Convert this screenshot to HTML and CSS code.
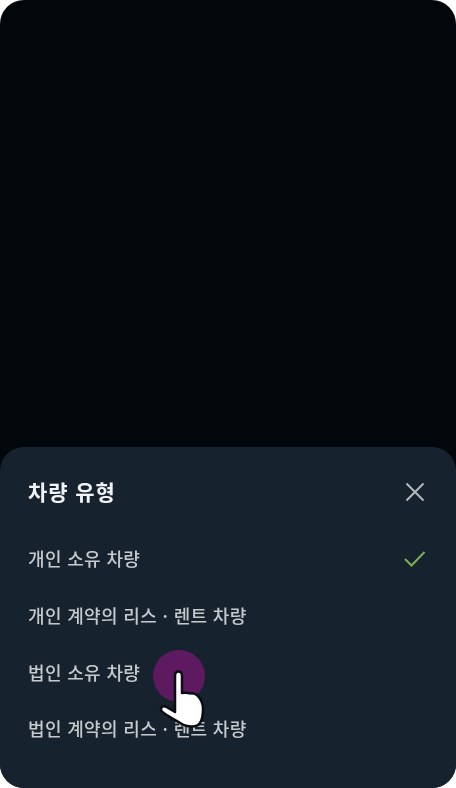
FILE: index.html
```html
<!DOCTYPE html>
<html lang="ko">
<head>
<meta charset="utf-8">
<title>차량 유형</title>
<link rel="stylesheet" href="styles.css">
</head>
<body>
<div class="frame">
  <div class="backdrop"></div>
  <section class="sheet">
    <header class="sheet-head">
      <h2 class="sheet-title">차량 유형</h2>
      <svg class="close" viewBox="0 0 20 20" width="20" height="20" fill="none" aria-hidden="true"><path d="M1.500 1.500 18.500 18.500M18.500 1.500 1.500 18.500"/></svg>
    </header>
    <ul class="options">
      <li class="option"><span>개인 소유 차량</span><svg class="check" viewBox="0 0 22 18" width="22" height="18" fill="none" aria-hidden="true"><path d="M1 9 7.500 15.500 20.500 2"/></svg></li>
      <li class="option"><span>개인 계약의 리스 · 렌트 차량</span></li>
      <li class="option"><span>법인 소유 차량</span></li>
      <li class="option"><span>법인 계약의 리스 · 렌트 차량</span></li>
    </ul>
    <div class="tap"></div>
    <svg class="hand" viewBox="0 0 52 62" width="52" height="62" aria-hidden="true"><path d="M20 8c0-2.800 1.500-4.500 3.500-4.500S27 5.200 27 8v17c3-.5 6-.5 8 .5 3-.5 6 .5 8 2.500 3 3 5 7 5 13 0 7-1 11-3 14-1.500 2.500-4 3.500-8 3.500-5 0-8-1-11-3-6-4-13-7-18-11-2-1.500-2.500-3.500-1.500-5s3.500-1.500 5-.5l8.500 5z"/></svg>
  </section>
</div>
</body>
</html>
```

FILE: styles.css
```css
html, body {
  margin: 0;
  padding: 0;
  background: #fff;
}
.frame {
  width: 456px;
  height: 788px;
  border-radius: 24px;
  overflow: hidden;
  display: flex;
  flex-direction: column;
  background: #02070c;
  font-family: "Noto Sans CJK KR", "Noto Sans", sans-serif;
}
.backdrop {
  flex: 1;
}
.sheet {
  position: relative;
  height: 341px;
  box-sizing: border-box;
  padding: 24px 28px 0;
  background: #16222e;
  border-radius: 24px 24px 0 0;
}
.sheet-head {
  display: flex;
  justify-content: space-between;
  align-items: center;
  height: 40px;
  padding-right: 3px;
}
.sheet-title {
  margin: 0;
  font-size: 21px;
  font-weight: 700;
  line-height: 40px;
  color: #f2f3f4;
  letter-spacing: 0.9px;
  filter: blur(0.6px);
}
.close {
  position: relative;
  top: 1px;
  filter: blur(0.4px);
}
.close path {
  stroke: #b4b8bc;
  stroke-width: 2;
}
.options {
  list-style: none;
  margin: 19px 0 0;
  padding: 0;
}
.option {
  display: flex;
  justify-content: space-between;
  align-items: center;
  height: 56.67px;
  padding-right: 2px;
  font-size: 18px;
  font-weight: 500;
  color: #c6c9cc;
  letter-spacing: 0.35px;
}
.option span {
  filter: blur(0.6px);
}
.check {
  position: relative;
  top: 1px;
  filter: blur(0.4px);
}
.check path {
  stroke: #7fae50;
  stroke-width: 2;
}
.tap {
  position: absolute;
  left: 153px;
  top: 203px;
  width: 52px;
  height: 52px;
  border-radius: 50%;
  background: #5e1a60;
}
.hand {
  position: absolute;
  left: 155px;
  top: 221px;
  filter: blur(0.5px);
}
.hand path {
  fill: #fff;
  stroke: #0b0d10;
  stroke-width: 2.5;
  stroke-linejoin: round;
}
```
